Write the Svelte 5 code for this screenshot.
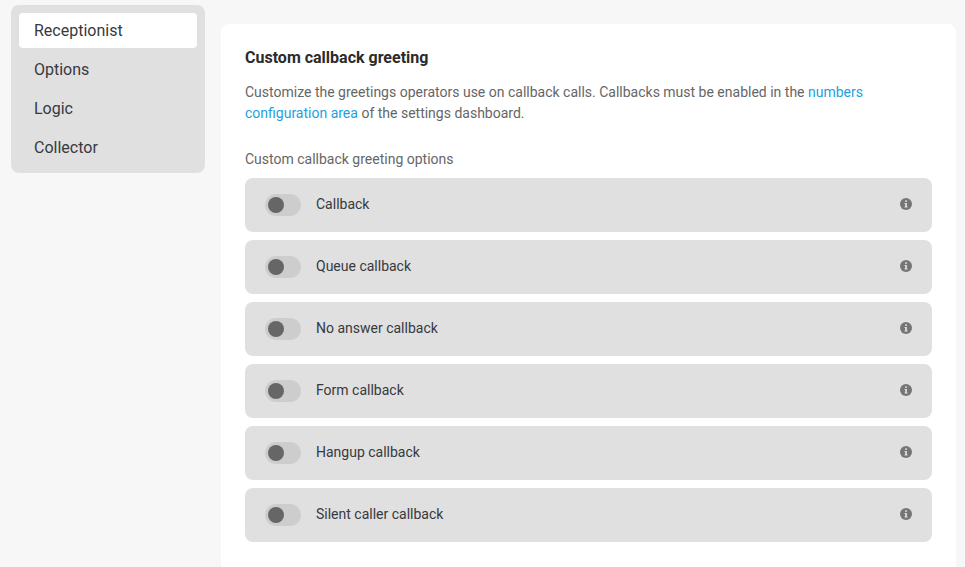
<script>
	const tabs = ['Receptionist', 'Options', 'Logic', 'Collector'];
	const options = [
		'Callback',
		'Queue callback',
		'No answer callback',
		'Form callback',
		'Hangup callback',
		'Silent caller callback'
	];
</script>

<main class="page">
	<nav class="sidebar">
		{#each tabs as tab, i}
			<div class="tab" class:active={i === 0}>{tab}</div>
		{/each}
	</nav>

	<section class="card">
		<h2>Custom callback greeting</h2>
		<p class="desc">
			Customize the greetings operators use on callback calls. Callbacks must be enabled in the
			<a href="#numbers">numbers configuration area</a> of the settings dashboard.
		</p>
		<div class="group-label">Custom callback greeting options</div>
		<div class="rows">
			{#each options as option}
				<div class="row">
					<span class="toggle"><span class="thumb"></span></span>
					<span class="label">{option}</span>
					<svg class="info" viewBox="0 0 12 12" width="12" height="12" aria-hidden="true">
						<circle cx="6" cy="6" r="6" fill="#757575" />
						<rect x="5.2" y="2.3" width="1.7" height="1.6" fill="#e0e0e0" />
						<path d="M4.6 5h2.3v3.4h0.7v1H4.5v-1h0.7V6H4.6z" fill="#e0e0e0" />
					</svg>
				</div>
			{/each}
		</div>
	</section>
</main>

<style>
	:global(body) {
		background: #f7f7f7;
		font-family: Roboto, 'Liberation Sans', sans-serif;
		overflow: hidden;
	}

	.page {
		display: flex;
		align-items: flex-start;
		gap: 16px;
		height: 567px;
		overflow: hidden;
		padding: 5px 9px 0 11px;
		box-sizing: border-box;
	}

	.sidebar {
		width: 194px;
		flex: none;
		box-sizing: border-box;
		padding: 8px;
		background: #e0e0e0;
		border-radius: 8px;
		display: flex;
		flex-direction: column;
		gap: 4px;
	}

	.tab {
		height: 35px;
		line-height: 35px;
		padding-left: 15px;
		font-size: 16px;
		color: #37393f;
		border-radius: 4px;
	}

	.tab.active {
		background: #fff;
	}

	.card {
		flex: 1;
		margin-top: 19px;
		padding: 24px;
		background: #fff;
		border-radius: 8px;
		min-height: 600px;
		box-sizing: border-box;
	}

	h2 {
		margin: 0;
		font-size: 16px;
		font-weight: 700;
		line-height: 20px;
		color: #2b2b2b;
	}

	.desc {
		margin: 14px 0 0;
		font-size: 14px;
		line-height: 21px;
		color: #666;
	}

	.desc a {
		color: #1e9fe0;
		text-decoration: none;
	}

	.group-label {
		margin-top: 25px;
		font-size: 14px;
		line-height: 20px;
		color: #666;
	}

	.rows {
		margin-top: 9px;
		display: flex;
		flex-direction: column;
		gap: 8px;
	}

	.row {
		height: 54px;
		display: flex;
		align-items: center;
		padding: 0 20px;
		background: #e0e0e0;
		border-radius: 8px;
	}

	.toggle {
		width: 36px;
		height: 22px;
		flex: none;
		display: flex;
		align-items: center;
		padding-left: 3px;
		box-sizing: border-box;
		background: #cdcdcd;
		border-radius: 11px;
	}

	.thumb {
		width: 16px;
		height: 16px;
		border-radius: 50%;
		background: #666;
	}

	.label {
		flex: 1;
		margin-left: 15px;
		font-size: 14px;
		color: #37393f;
		position: relative;
		top: -1px;
	}

	.info {
		position: relative;
		top: -1px;
	}
</style>
